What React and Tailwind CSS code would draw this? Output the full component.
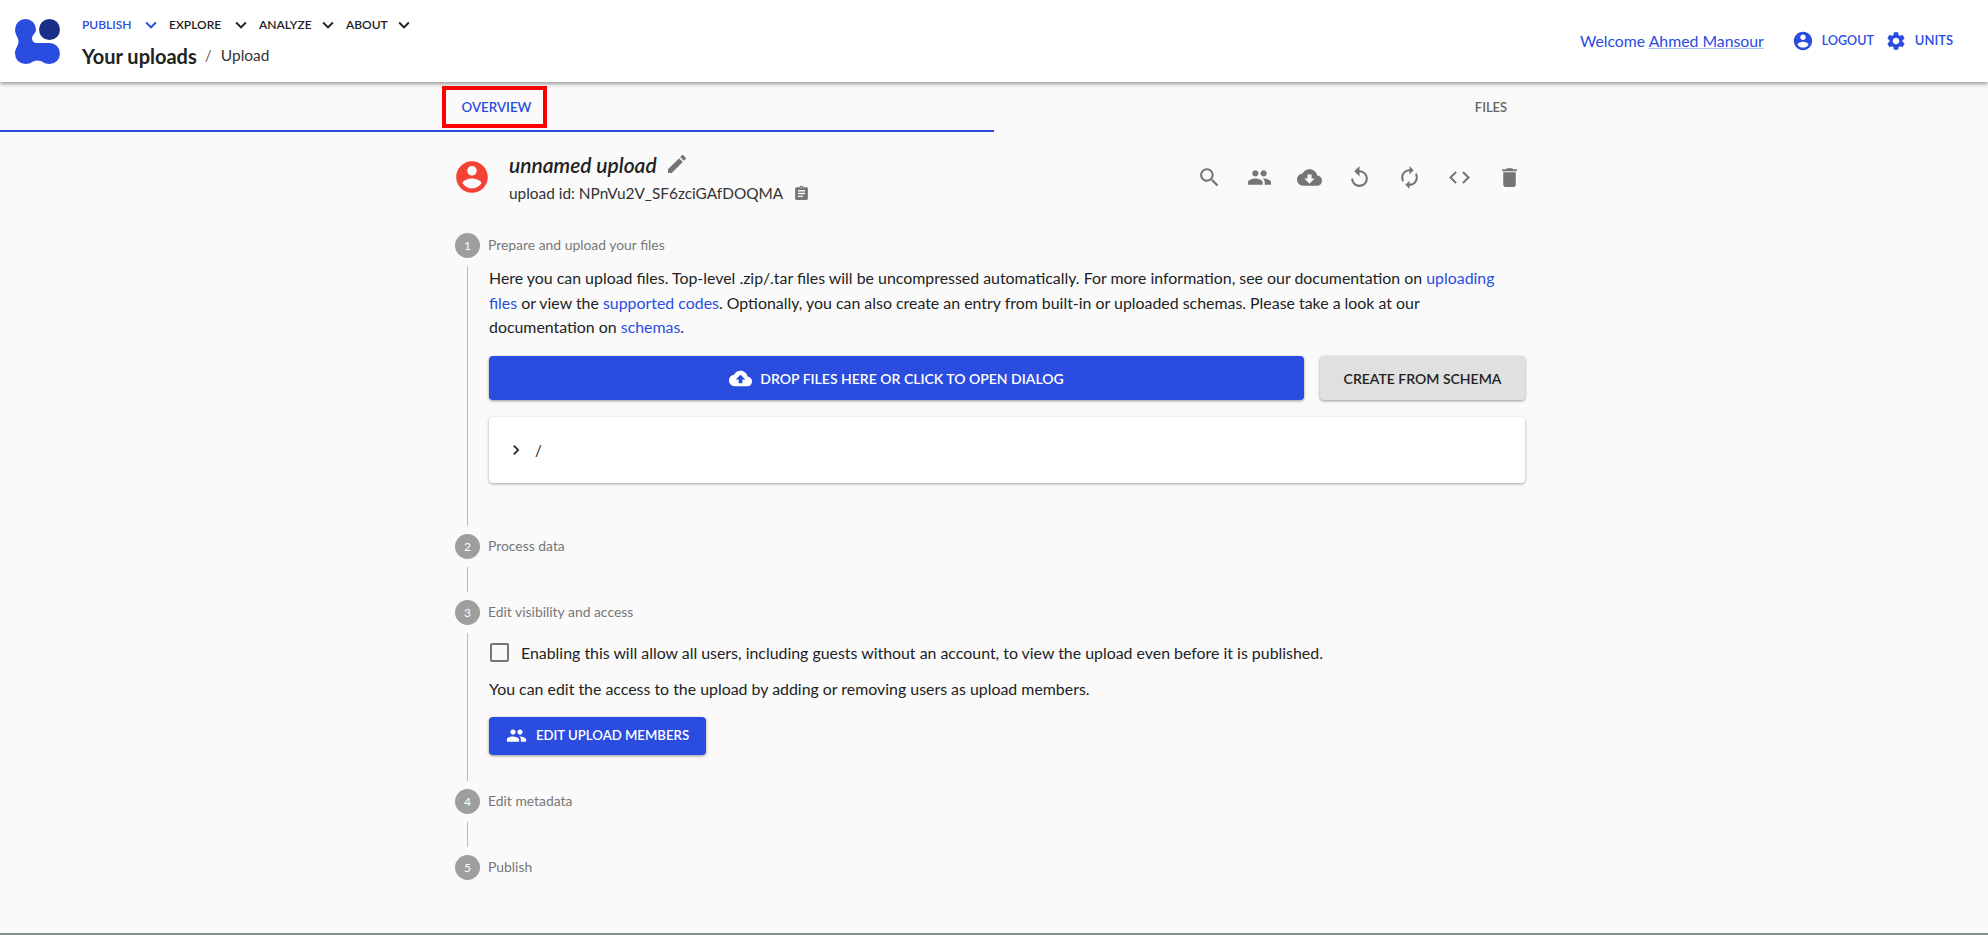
const ICONS = {
  search: "M15.5 14h-.79l-.28-.27C15.41 12.59 16 11.11 16 9.5 16 5.91 13.09 3 9.5 3S3 5.91 3 9.5 5.91 16 9.5 16c1.61 0 3.09-.59 4.23-1.57l.27.28v.79l5 4.99L20.49 19l-4.99-5zm-6 0C7.01 14 5 11.99 5 9.5S7.01 5 9.5 5 14 7.01 14 9.5 11.99 14 9.5 14z",
  people: "M16 11c1.66 0 2.99-1.34 2.99-3S17.66 5 16 5c-1.66 0-3 1.34-3 3s1.34 3 3 3zm-8 0c1.66 0 2.99-1.34 2.99-3S9.66 5 8 5C6.34 5 5 6.34 5 8s1.34 3 3 3zm0 2c-2.33 0-7 1.17-7 3.5V19h14v-2.5c0-2.33-4.67-3.5-7-3.5zm8 0c-.29 0-.62.02-.97.05 1.16.84 1.97 1.97 1.97 3.45V19h6v-2.5c0-2.33-4.67-3.5-7-3.5z",
  cloudDownload: "M19.35 10.04C18.67 6.59 15.64 4 12 4 9.11 4 6.6 5.64 5.35 8.04 2.34 8.36 0 10.91 0 14c0 3.31 2.69 6 6 6h13c2.76 0 5-2.24 5-5 0-2.64-2.05-4.78-4.65-4.96zM17 13l-5 5-5-5h3V9h4v4h3z",
  cloudUpload: "M19.35 10.04C18.67 6.59 15.64 4 12 4 9.11 4 6.6 5.64 5.35 8.04 2.34 8.36 0 10.91 0 14c0 3.31 2.69 6 6 6h13c2.76 0 5-2.24 5-5 0-2.64-2.05-4.78-4.65-4.96zM14 13v4h-4v-4H7l5-5 5 5h-3z",
  replay: "M12 5V1L7 6l5 5V7c3.31 0 6 2.69 6 6s-2.69 6-6 6-6-2.69-6-6H4c0 4.42 3.58 8 8 8s8-3.58 8-8-3.58-8-8-8z",
  autorenew: "M12 6v3l4-4-4-4v3c-4.42 0-8 3.58-8 8 0 1.57.46 3.03 1.24 4.26L6.7 14.8c-.45-.83-.7-1.79-.7-2.8 0-3.31 2.69-6 6-6zm6.76 1.74L17.3 9.2c.44.84.7 1.79.7 2.8 0 3.31-2.69 6-6 6v-3l-4 4 4 4v-3c4.42 0 8-3.58 8-8 0-1.57-.46-3.03-1.24-4.26z",
  code: "M9.4 16.6L4.8 12l4.6-4.6L8 6l-6 6 6 6 1.4-1.4zm5.2 0l4.6-4.6-4.6-4.6L16 6l6 6-6 6-1.4-1.4z",
  trash: "M6 19c0 1.1.9 2 2 2h8c1.1 0 2-.9 2-2V7H6v12zM19 4h-3.5l-1-1h-5l-1 1H5v2h14V4z",
  edit: "M3 17.25V21h3.75L17.81 9.94l-3.75-3.75L3 17.25zM20.71 7.04c.39-.39.39-1.02 0-1.41l-2.34-2.34c-.39-.39-1.02-.39-1.41 0l-1.83 1.83 3.75 3.75 1.83-1.83z",
  assignment: "M19 3h-4.18C14.4 1.84 13.3 1 12 1c-1.3 0-2.4.84-2.82 2H5c-1.1 0-2 .9-2 2v14c0 1.1.9 2 2 2h14c1.1 0 2-.9 2-2V5c0-1.1-.9-2-2-2zm-7 0c.55 0 1 .45 1 1s-.45 1-1 1-1-.45-1-1 .45-1 1-1zm2 14H7v-2h7v2zm3-4H7v-2h10v2zm0-4H7V7h10v2z",
  account: "M12 2C6.48 2 2 6.48 2 12s4.48 10 10 10 10-4.48 10-10S17.52 2 12 2zm0 3c1.66 0 3 1.34 3 3s-1.34 3-3 3-3-1.34-3-3 1.34-3 3-3zm0 14.2c-2.5 0-4.71-1.28-6-3.22.03-1.99 4-3.08 6-3.08 1.99 0 5.97 1.09 6 3.08-1.29 1.94-3.5 3.22-6 3.22z",
  settings: "M19.14 12.94c.04-.3.06-.61.06-.94 0-.32-.02-.64-.07-.94l2.03-1.58c.18-.14.23-.41.12-.61l-1.92-3.32c-.12-.22-.37-.29-.59-.22l-2.39.96c-.5-.38-1.03-.7-1.62-.94l-.36-2.54c-.04-.24-.24-.41-.48-.41h-3.84c-.24 0-.43.17-.47.41l-.36 2.54c-.59.24-1.13.57-1.62.94l-2.39-.96c-.22-.08-.47 0-.59.22L2.74 8.87c-.12.21-.08.47.12.61l2.03 1.58c-.05.3-.09.63-.09.94s.02.64.07.94l-2.03 1.58c-.18.14-.23.41-.12.61l1.92 3.32c.12.22.37.29.59.22l2.39-.96c.5.38 1.03.7 1.62.94l.36 2.54c.05.24.24.41.48.41h3.84c.24 0 .44-.17.47-.41l.36-2.54c.59-.24 1.13-.56 1.62-.94l2.39.96c.22.08.47 0 .59-.22l1.92-3.32c.12-.22.07-.47-.12-.61l-2.01-1.58zM12 15.6c-1.98 0-3.6-1.62-3.6-3.6s1.62-3.6 3.6-3.6 3.6 1.62 3.6 3.6-1.62 3.6-3.6 3.6z",
  expand: "M16.59 8.59L12 13.17 7.41 8.59 6 10l6 6 6-6z",
  chevron: "M10 6L8.59 7.41 13.17 12l-4.58 4.59L10 18l6-6z",
};

const Icon = ({ name, className }) => (
  <svg viewBox="0 0 24 24" fill="currentColor" className={className}>
    <path d={ICONS[name]} />
  </svg>
);

const Logo = () => (
  <svg viewBox="0 0 45 45" className="size-[45px] shrink-0">
    <circle cx="34.5" cy="10.5" r="10.5" fill="#192e86" />
    <path
      fill="#2a4cdf"
      d="M10.5 0A10.5 10.5 0 0 1 21 10.5C21 14 17 16 17 19.5C17 22 19 24 21.5 24C25 24 29 24 34.5 24A10.5 10.5 0 0 1 34.5 45C29 45 27 41.5 22.5 41.5C18 41.5 16 45 10.500 45A10.5 10.5 0 0 1 0 34.5C0 29 3.5 27 3.5 22.5C3.5 18 0 16 0 10.5A10.5 10.5 0 0 1 10.5 0z"
    />
  </svg>
);

const NAV_ITEMS = [
  { label: "PUBLISH", width: "w-[87px]", color: "text-[#2a4cdf]" },
  { label: "EXPLORE", width: "w-[90px]", color: "text-[#222]" },
  { label: "ANALYZE", width: "w-[87px]", color: "text-[#222]" },
  { label: "ABOUT", width: "w-[76px]", color: "text-[#222]" },
];

const ACTIONS = ["search", "people", "cloudDownload", "replay", "autorenew", "code", "trash"];

const Header = () => (
  <header className="relative z-10 flex h-[82px] items-center justify-between bg-white pl-[15px] pr-[35px] shadow-[0_2px_4px_rgba(0,0,0,0.4)]">
    <div className="flex items-center gap-[22px]">
      <Logo />
      <div className="flex flex-col gap-[9px]">
        <nav className="flex h-[20px] items-center">
          {NAV_ITEMS.map((item) => (
            <div
              key={item.label}
              className={`flex items-center justify-between pr-[7px] text-[12px] font-semibold ${item.width} ${item.color}`}
            >
              <span>{item.label}</span>
              <Icon name="expand" className="size-[22px]" />
            </div>
          ))}
        </nav>
        <div className="flex h-[24px] items-center">
          <span className="text-[20px] font-bold text-[#222]">Your uploads</span>
          <span className="ml-[8px] text-[15.5px] text-[#666]">/</span>
          <span className="ml-[9px] text-[15.5px] text-[#333]">Upload</span>
        </div>
      </div>
    </div>
    <div className="flex items-center text-[#2a4cdf]">
      <span className="text-[15.8px]">
        Welcome <span className="underline decoration-[#b3c0f2]">Ahmed Mansour</span>
      </span>
      <Icon name="account" className="ml-[28px] size-[22px]" />
      <span className="ml-[8px] text-[12.5px] font-semibold">LOGOUT</span>
      <Icon name="settings" className="ml-[11px] size-[22px]" />
      <span className="ml-[8px] text-[13px] font-semibold">UNITS</span>
    </div>
  </header>
);

const Tabs = () => (
  <div className="flex h-[49px]">
    <div className="flex h-full w-[994px] items-end border-b-2 border-[#2a4cdf] pb-[2px] pl-[442px]">
      <div className="flex h-[42px] w-[105px] items-center justify-center border-4 border-[#ff0000] pl-[4px] pt-[2px] text-[13.3px] font-semibold text-[#2a4cdf]">
        OVERVIEW
      </div>
    </div>
    <div className="flex flex-1 items-center justify-center pt-[1px] text-[13px] font-semibold text-[#666]">
      FILES
    </div>
  </div>
);

const StepHead = ({ number, label }) => (
  <div className="flex h-[25px] items-center gap-[8px]">
    <div className="flex size-[25px] items-center justify-center rounded-full bg-[#9e9e9e] text-[12px] text-white">
      {number}
    </div>
    <span className="text-[13.9px] text-[#777]">{label}</span>
  </div>
);

const StepBody = ({ className, children }) => (
  <div className={`ml-[12px] my-[8px] border-l border-[#bdbdbd] pl-[21px] ${className}`}>{children}</div>
);

const UploadHeading = () => (
  <div className="flex h-[62px] items-center justify-between">
    <div className="flex items-center gap-[18px]">
      <Icon name="account" className="ml-[-2px] size-[38px] text-[#f44336]" />
      <div className="flex flex-col">
        <div className="flex items-center gap-[8px]">
          <span className="text-[21px] font-semibold italic text-[#222]">unnamed upload</span>
          <Icon name="edit" className="size-[24px] text-[#757575]" />
        </div>
        <div className="mt-[2px] flex items-center gap-[10px] text-[15.4px] text-[#333]">
          <span>upload id: NPnVu2V_SF6zciGAfDOQMA</span>
          <Icon name="assignment" className="size-[17px] text-[#757575]" />
        </div>
      </div>
    </div>
    <div className="mr-[-9px] flex items-center">
      {ACTIONS.map((name) => (
        <div key={name} className="flex w-[50px] justify-center">
          <Icon name={name} className="size-[25px] text-[#757575]" />
        </div>
      ))}
    </div>
  </div>
);

const Link = ({ children }) => <span className="text-[#2a4cdf]">{children}</span>;

const Main = () => (
  <main className="ml-[455px] w-[1070px] pt-[14px]">
    <UploadHeading />
    <div className="mt-[25px]">
      <StepHead number="1" label="Prepare and upload your files" />
      <StepBody className="h-[260px]">
        <p className="text-[15.9px] leading-[24.7px] text-[#222]">
          Here you can upload files. Top-level .zip/.tar files will be uncompressed automatically. For more information, see our documentation on <Link>uploading files</Link> or view the <Link>supported codes</Link>. Optionally, you can also create an entry from built-in or uploaded schemas. Please take a look at our documentation on <Link>schemas</Link>.
        </p>
        <div className="mt-[16px] flex gap-[16px]">
          <button className="flex h-[44px] w-[815px] items-center justify-center gap-[8px] rounded-[4px] bg-[#2a4cdf] text-[14px] font-semibold text-white shadow-[0_1px_3px_rgba(0,0,0,0.4)]">
            <Icon name="cloudUpload" className="size-[23px]" />
            DROP FILES HERE OR CLICK TO OPEN DIALOG
          </button>
          <button className="h-[44px] flex-1 rounded-[4px] bg-[#e0e0e0] text-[14px] font-semibold text-[#222] shadow-[0_1px_3px_rgba(0,0,0,0.4)]">
            CREATE FROM SCHEMA
          </button>
        </div>
        <div className="mt-[17px] flex h-[66px] items-center gap-[9px] rounded-[4px] bg-white pl-[17px] text-[#222] shadow-[0_1px_3px_rgba(0,0,0,0.35)]">
          <Icon name="chevron" className="size-[20px]" />
          <span className="text-[15px]">/</span>
        </div>
      </StepBody>
      <StepHead number="2" label="Process data" />
      <StepBody className="h-[25px]" />
      <StepHead number="3" label="Edit visibility and access" />
      <StepBody className="h-[148px]">
        <div className="flex items-center gap-[12px] pt-[8px]">
          <div className="ml-[1px] size-[19px] rounded-[2px] border-2 border-[#757575]" />
          <span className="text-[15.9px] text-[#222]">
            Enabling this will allow all users, including guests without an account, to view the upload even before it is published.
          </span>
        </div>
        <p className="mt-[12px] text-[15.9px] text-[#222]">
          You can edit the access to the upload by adding or removing users as upload members.
        </p>
        <button className="mt-[16px] flex h-[38px] w-[217px] items-center justify-center gap-[9px] rounded-[4px] bg-[#2a4cdf] text-[13.2px] font-semibold text-white shadow-[0_1px_3px_rgba(0,0,0,0.4)]">
          <Icon name="people" className="size-[21px]" />
          EDIT UPLOAD MEMBERS
        </button>
      </StepBody>
      <StepHead number="4" label="Edit metadata" />
      <StepBody className="h-[25px]" />
      <StepHead number="5" label="Publish" />
    </div>
  </main>
);

const App = () => (
  <div className="flex h-[935px] flex-col overflow-hidden border-b-2 border-[#7f8f8f] bg-[#fafafa] font-['Lato','Noto_Sans',sans-serif]">
    <Header />
    <div className="pt-px">
      <Tabs />
      <Main />
    </div>
  </div>
);

export default App;
